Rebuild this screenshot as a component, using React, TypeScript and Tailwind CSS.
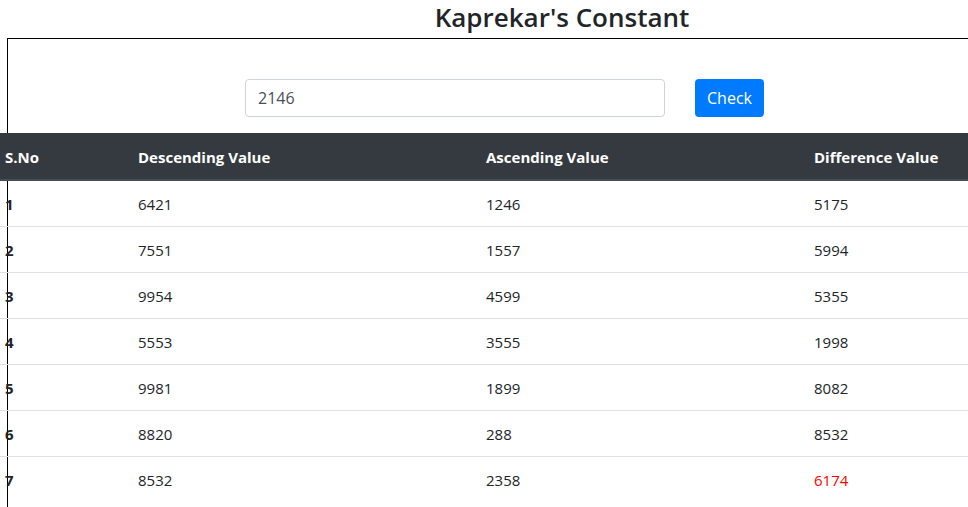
import React, { useState } from 'react';

// --- helpers ---
const kaprekarSteps = (start: string) => {
    const rows: { desc: number; asc: number; diff: number }[] = [];
    let n = parseInt(start, 10);
    for (let i = 0; i < 10; i++) {
        const digits = String(n).padStart(4, '0').split('');
        const desc = parseInt([...digits].sort((a, b) => b.localeCompare(a)).join(''), 10);
        const asc = parseInt([...digits].sort((a, b) => a.localeCompare(b)).join(''), 10);
        const diff = desc - asc;
        rows.push({ desc, asc, diff });
        if (diff === 6174 || diff === 0) break;
        n = diff;
    }
    return rows;
};

export default function App() {
    const [value, setValue] = useState('2146');
    const [rows, setRows] = useState(() => kaprekarSteps('2146'));

    return (
        <div className="w-screen h-screen overflow-hidden bg-white text-[#212529] font-['Open_Sans',sans-serif]">
            <div className="ml-[7px] w-[1110px]">
                <h2 className="text-center text-[26px] leading-[34px] pb-1 font-semibold">Kaprekar's Constant</h2>

                <div className="border-l border-t border-black pt-[40px] pb-10">
                    <div className="flex items-center pl-[237px] gap-[30px]">
                        <input
                            value={value}
                            onChange={(e) => setValue(e.target.value)}
                            className="w-[420px] h-[38px] px-3 border border-[#ced4da] rounded text-base text-[#495057] outline-none"
                        />
                        <button
                            onClick={() => setRows(kaprekarSteps(value))}
                            className="h-[38px] px-3 rounded bg-[#007bff] text-white text-base"
                        >
                            Check
                        </button>
                    </div>

                    {/* results */}
                    <table className="mt-4 -ml-[15px] w-[1124px] table-fixed border-collapse text-[15px] leading-[21px]">
                        <thead>
                            <tr className="bg-[#343a40] text-white text-left">
                                <th className="w-[133px] px-3 pt-[14px] pb-[11px] border-b-2 border-[#454d55] font-bold">S.No</th>
                                <th className="w-[348px] px-3 pt-[14px] pb-[11px] border-b-2 border-[#454d55] font-bold">Descending Value</th>
                                <th className="w-[328px] px-3 pt-[14px] pb-[11px] border-b-2 border-[#454d55] font-bold">Ascending Value</th>
                                <th className="px-3 pt-[14px] pb-[11px] border-b-2 border-[#454d55] font-bold">Difference Value</th>
                            </tr>
                        </thead>
                        <tbody>
                            {rows.map((r, i) => (
                                <tr key={i} className="border-t border-[#dee2e6] first:border-t-0">
                                    <th className="px-3 pt-[13px] pb-[11px] text-left font-bold">{i + 1}</th>
                                    <td className="px-3 pt-[13px] pb-[11px]">{r.desc}</td>
                                    <td className="px-3 pt-[13px] pb-[11px]">{r.asc}</td>
                                    <td className={`px-3 pt-[13px] pb-[11px] ${r.diff === 6174 ? 'text-[#ff0000]' : ''}`}>{r.diff}</td>
                                </tr>
                            ))}
                        </tbody>
                    </table>
                </div>
            </div>
        </div>
    );
}
